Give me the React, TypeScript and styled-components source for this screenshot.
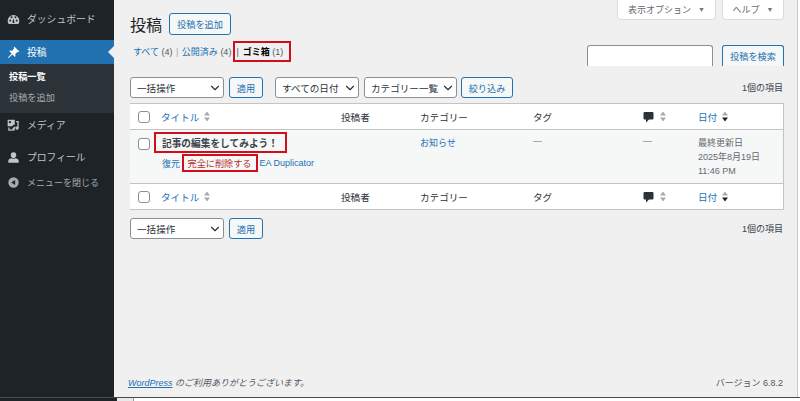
import styled, { createGlobalStyle } from "styled-components";
import { ChevronDown } from "lucide-react";

const GlobalStyle = createGlobalStyle`
  html, body {
    margin: 0;
    padding: 0;
    background: #f0f0f1;
  }
  body {
    font-family: "Liberation Sans", "Noto Sans CJK JP", sans-serif;
    font-size: 9px;
    color: #3c434a;
  }
`;

const Page = styled.div`
  display: flex;
  flex-direction: column;
  width: 800px;
  height: 401px;
  overflow: hidden;
  background: #ffffff;
`;

const Screen = styled.div`
  display: flex;
  height: 397px;
  margin-right: 2px;
`;

const BottomEdge = styled.div`
  display: flex;
  height: 4px;
  border-top: 1px solid #4a4a4a;
  box-sizing: border-box;
`;

const EdgeDark = styled.div`
  width: 117px;
  background: #1d2327;
`;

const EdgeLight = styled.div`
  width: 16px;
  background: #e9e9e9;
  border-right: 1px solid #9a9a9a;
`;

const Sidebar = styled.nav`
  width: 114px;
  flex-shrink: 0;
  background: #1d2327;
  color: #c3c4c7;
  padding-top: 8px;
`;

const MenuItem = styled.div<{ $active?: boolean; $height?: number; $dim?: boolean; $top?: number }>`
  position: relative;
  display: flex;
  align-items: center;
  gap: 7px;
  height: ${(p) => p.$height ?? 22}px;
  margin-top: ${(p) => p.$top ?? 0}px;
  padding-left: 7px;
  font-size: ${(p) => (p.$dim ? 9 : 9.8)}px;
  background: ${(p) => (p.$active ? "#2271b1" : "transparent")};
  color: ${(p) => (p.$active ? "#ffffff" : p.$dim ? "#a7aaad" : "#c3c4c7")};
`;

const MenuIcon = styled.svg`
  width: 13px;
  height: 13px;
  flex-shrink: 0;
  fill: currentColor;
`;

const ActiveNotch = styled.span`
  position: absolute;
  right: 0;
  top: 6px;
  border-style: solid;
  border-width: 6px 6px 6px 0;
  border-color: transparent #f0f0f1 transparent transparent;
`;

const SubMenu = styled.div`
  background: #2c3338;
  padding: 3px 0 4px 9px;
`;

const SubItem = styled.div<{ $current?: boolean }>`
  height: 21px;
  line-height: 21px;
  font-size: 9.2px;
  font-weight: ${(p) => (p.$current ? 700 : 400)};
  color: ${(p) => (p.$current ? "#ffffff" : "#a7aaad")};
`;

const Content = styled.main`
  flex: 1;
  display: flex;
  flex-direction: column;
  background: #f0f0f1;
  padding: 0 13px 0 16px;
  min-width: 0;
  border-right: 1px solid #c8c8c8;
`;

const ScreenTabs = styled.div`
  display: flex;
  flex-shrink: 0;
  justify-content: flex-end;
  gap: 6px;
  height: 20px;
`;

const ScreenTab = styled.div<{ $width: number }>`
  display: flex;
  align-items: center;
  justify-content: center;
  gap: 7px;
  box-sizing: border-box;
  width: ${(p) => p.$width}px;
  background: #ffffff;
  border: 1px solid #dcdcde;
  border-top: none;
  border-radius: 0 0 4px 4px;
  color: #646970;
  font-size: 9px;
`;

const Caret = styled.span`
  font-size: 7px;
  color: #72777c;
`;

const TitleRow = styled.div`
  display: flex;
  flex-shrink: 0;
  align-items: center;
  gap: 7px;
  margin-top: -7px;
  height: 22px;
`;

const PageTitle = styled.h1`
  margin: 0;
  font-size: 16px;
  font-weight: 400;
  color: #1d2327;
`;

const Button = styled.div<{ $width: number; $height?: number; $cut?: boolean }>`
  display: flex;
  align-items: center;
  justify-content: center;
  box-sizing: border-box;
  flex-shrink: 0;
  width: ${(p) => p.$width}px;
  height: ${(p) => p.$height ?? 21}px;
  background: #f6f7f7;
  border: 1px solid #2271b1;
  border-radius: 3px;
  color: #2271b1;
  font-size: 9.2px;
  white-space: nowrap;
  ${(p) => (p.$cut ? "border-bottom: none; border-radius: 3px 3px 0 0;" : "")}
`;

const SearchRow = styled.div`
  display: flex;
  flex-shrink: 0;
  align-items: flex-start;
  justify-content: space-between;
  height: 36px;
  margin-top: 6px;
`;

const Views = styled.div`
  display: flex;
  align-items: center;
  height: 21px;
  padding-left: 3px;
  font-size: 9px;
  color: #646970;
  white-space: pre;
`;

const Link = styled.span`
  color: #2271b1;
`;

const Count = styled.span`
  color: #50575e;
  font-size: 9px;
  font-weight: 400;
`;

const Sep = styled.span`
  margin: 0 3.5px;
  color: #a7aaad;
`;

const Boxed = styled.span`
  display: inline-flex;
  align-items: center;
  box-sizing: border-box;
  width: 58px;
  height: 21px;
  border: 2.5px solid #d30c1c;
  padding-left: 1.5px;
  margin-left: 1.5px;
  color: #000000;
  font-weight: 700;
`;

const BoxedSep = styled.span`
  margin-right: 4px;
  color: #50575e;
  font-weight: 400;
`;

const SearchForm = styled.div`
  display: flex;
  gap: 9px;
  margin-top: 4px;
`;

const SearchInput = styled.div`
  box-sizing: border-box;
  width: 126px;
  height: 21px;
  background: #ffffff;
  border: 1px solid #8c8f94;
  border-bottom: none;
  border-radius: 3px 3px 0 0;
`;

const Toolbar = styled.div`
  display: flex;
  flex-shrink: 0;
  align-items: center;
  height: 21px;
`;

const Select = styled.div<{ $width: number; $after?: number }>`
  display: flex;
  align-items: center;
  justify-content: space-between;
  box-sizing: border-box;
  flex-shrink: 0;
  width: ${(p) => p.$width}px;
  height: 21px;
  padding: 0 1px 0 6px;
  margin-right: ${(p) => p.$after ?? 5}px;
  background: #ffffff;
  border: 1px solid #8c8f94;
  border-radius: 3px;
  font-size: 9.6px;
  color: #2c3338;
  white-space: nowrap;
`;

const Spacer = styled.div<{ $width: number }>`
  width: ${(p) => p.$width}px;
  flex-shrink: 0;
`;

const ItemCount = styled.div`
  margin-left: auto;
  margin-right: 1px;
  font-size: 9px;
  color: #3c434a;
`;

const Table = styled.div`
  box-sizing: border-box;
  flex-shrink: 0;
  margin-top: 5px;
  margin-bottom: 8px;
  width: 654px;
  background: #ffffff;
  border: 1px solid #c3c4c7;
  border-left: none;
  display: grid;
  grid-template-columns: 31px 180px 79px 113px 110px 55px 1fr;
`;

const HeadCell = styled.div<{ $top?: boolean }>`
  display: flex;
  align-items: center;
  gap: 5px;
  box-sizing: border-box;
  height: 26px;
  font-size: 9.6px;
  color: #2c3338;
  ${(p) =>
    p.$top
      ? "border-bottom: 1px solid #c3c4c7;"
      : "border-top: 1px solid #c3c4c7;"}
`;

const CheckCell = styled(HeadCell)`
  padding-left: 8px;
`;

const Checkbox = styled.span`
  display: block;
  box-sizing: border-box;
  width: 12px;
  height: 12px;
  background: #ffffff;
  border: 1px solid #8c8f94;
  border-radius: 3px;
`;

const RowCell = styled.div`
  background: #f6f7f7;
  height: 53px;
  font-size: 9px;
  color: #646970;
  padding-top: 6px;
  box-sizing: border-box;
`;

const RowCheck = styled(RowCell)`
  padding-left: 8px;
  padding-top: 8px;
`;

const TitleCell = styled(RowCell)`
  padding-top: 2px;
`;

const RowTitle = styled.div`
  display: flex;
  align-items: center;
  box-sizing: border-box;
  width: fit-content;
  height: 21px;
  margin-left: -7px;
  padding: 0 7px 0 6px;
  border: 2.5px solid #d30c1c;
  font-weight: 700;
  font-size: 9.7px;
  color: #3c434a;
`;

const RowActions = styled.div`
  display: flex;
  align-items: center;
  height: 18px;
  margin-top: 1px;
  padding-left: 1px;
  white-space: pre;
`;

const DeleteBox = styled.span`
  display: inline-flex;
  align-items: center;
  box-sizing: border-box;
  height: 18px;
  border: 2.5px solid #d30c1c;
  padding: 0 5px 0 3.5px;
  margin: 0 1px 0 2px;
  color: #b32d2e;
  font-size: 9.15px;
`;

const DateText = styled.div`
  line-height: 14px;
  font-size: 9px;
`;

const Sort = styled.svg`
  width: 6px;
  height: 11px;
  flex-shrink: 0;
`;

const CommentIcon = styled.svg`
  width: 11px;
  height: 12px;
  margin-right: 1px;
  fill: #2c3338;
`;

const Footer = styled.footer`
  display: flex;
  justify-content: space-between;
  margin: auto 0 0 -2px;
  padding: 0 1px 8px 0;
  font-size: 9px;
  color: #50575e;
`;

const Thanks = styled.span`
  font-style: italic;
`;

const FooterLink = styled.span`
  color: #2271b1;
  text-decoration: underline;
`;

function SortArrows({ dark }: { dark?: boolean }) {
  return (
    <Sort viewBox="0 0 6 11">
      <path d="M3 0.5 L6 4.500 H0 Z" fill="#a7aaad" />
      <path d="M0 6.500 H6 L3 10.500 Z" fill={dark ? "#1d2327" : "#a7aaad"} />
    </Sort>
  );
}

function Comment() {
  return (
    <CommentIcon viewBox="0 0 11 12">
      <path d="M1.500 1 H9.500 A1 1 0 0 1 10.500 2 V7.500 A1 1 0 0 1 9.500 8.500 H6 L3 11.500 V8.500 H1.500 A1 1 0 0 1 .5 7.500 V2 A1 1 0 0 1 1.500 1 Z" />
    </CommentIcon>
  );
}

function HeaderCells({ top }: { top?: boolean }) {
  return (
    <>
      <CheckCell $top={top}>
        <Checkbox />
      </CheckCell>
      <HeadCell $top={top}>
        <Link>タイトル</Link>
        <SortArrows />
      </HeadCell>
      <HeadCell $top={top}>投稿者</HeadCell>
      <HeadCell $top={top}>カテゴリー</HeadCell>
      <HeadCell $top={top}>タグ</HeadCell>
      <HeadCell $top={top}>
        <Comment />
        <SortArrows />
      </HeadCell>
      <HeadCell $top={top}>
        <Link>日付</Link>
        <SortArrows dark />
      </HeadCell>
    </>
  );
}

export default function App() {
  return (
    <Page>
      <GlobalStyle />
      <Screen>
        <Sidebar>
          <MenuItem>
            <MenuIcon viewBox="0 0 20 20">
              <path d="M10 3a9 9 0 0 0-9 9c0 1.900.6 3.600 1.500 5h15c.9-1.400 1.500-3.100 1.500-5a9 9 0 0 0-9-9zM5 13a1.500 1.500 0 1 1 0-3 1.500 1.500 0 0 1 0 3zm2-5a1.500 1.500 0 1 1 0-3 1.500 1.500 0 0 1 0 3zm4.500 6.500a1.800 1.800 0 0 1-3 0c0-.8 1.500-6 1.500-6s1.500 5.200 1.500 6zM13 8a1.500 1.500 0 1 1 0-3 1.500 1.500 0 0 1 0 3zm2 5a1.500 1.500 0 1 1 0-3 1.500 1.500 0 0 1 0 3z" />
            </MenuIcon>
            ダッシュボード
          </MenuItem>
          <MenuItem $active $height={24} $top={10}>
            <MenuIcon viewBox="0 0 20 20">
              <path d="M11.500 1 19 8.500 17.700 9.800 16.500 8.900 12.500 12.500C13.300 14 13.200 15.700 12.200 16.800L8.300 12.900 2.500 18.500 1.500 17.500 7.100 11.700 3.200 7.800C4.300 6.800 6 6.700 7.500 7.500L11.100 3.500 10.200 2.300Z" />
            </MenuIcon>
            投稿
            <ActiveNotch />
          </MenuItem>
          <SubMenu>
            <SubItem $current>投稿一覧</SubItem>
            <SubItem>投稿を追加</SubItem>
          </SubMenu>
          <MenuItem $height={24}>
            <MenuIcon viewBox="0 0 20 20">
              <path d="M1 1h11v8H9.500l-1 2H1zm3.500 2a1.800 1.800 0 1 0 0 3.600 1.800 1.800 0 0 0 0-3.600zM14 3h4v11a2.500 2.500 0 1 1-2-2.400V5h-2zM2 13h2v3h4v2H2zm8-1h3v1.500h-1V16a2 2 0 1 1-2-2z" />
            </MenuIcon>
            メディア
          </MenuItem>
          <MenuItem $height={28} $top={6}>
            <MenuIcon viewBox="0 0 20 20">
              <path d="M10 2a4.200 4.200 0 0 1 4.200 4.500c0 2.600-1.900 4.500-4.200 4.500S5.800 9.100 5.800 6.500A4.200 4.200 0 0 1 10 2zM2 18v-3c0-2 3-3.500 5-3.800 1.800 1.200 4.200 1.200 6 0 2 .3 5 1.800 5 3.800v3z" />
            </MenuIcon>
            プロフィール
          </MenuItem>
          <MenuItem $height={22} $dim>
            <MenuIcon viewBox="0 0 20 20">
              <path d="M10 2a8 8 0 1 1 0 16 8 8 0 0 1 0-16zm2.500 4L6.500 10l6 4z" />
            </MenuIcon>
            メニューを閉じる
          </MenuItem>
        </Sidebar>
        <Content>
          <ScreenTabs>
            <ScreenTab $width={99}>
              表示オプション <Caret>▼</Caret>
            </ScreenTab>
            <ScreenTab $width={62}>
              ヘルプ <Caret>▼</Caret>
            </ScreenTab>
          </ScreenTabs>
          <TitleRow>
            <PageTitle>投稿</PageTitle>
            <Button $width={62} $height={22}>投稿を追加</Button>
          </TitleRow>
          <SearchRow>
            <Views>
              <Link>すべて </Link>
              <Count>(4)</Count>
              <Sep>|</Sep>
              <Link>公開済み </Link>
              <Count>(4)</Count>
              <Boxed>
                <BoxedSep>|</BoxedSep>
                ゴミ箱 <Count>(1)</Count>
              </Boxed>
            </Views>
            <SearchForm>
              <SearchInput />
              <Button $width={62} $cut>投稿を検索</Button>
            </SearchForm>
          </SearchRow>
          <Toolbar>
            <Select $width={94}>
              一括操作 <ChevronDown size={14} />
            </Select>
            <Button $width={34}>適用</Button>
            <Spacer $width={12} />
            <Select $width={84}>
              すべての日付 <ChevronDown size={14} />
            </Select>
            <Select $width={93} $after={4}>
              カテゴリー一覧 <ChevronDown size={14} />
            </Select>
            <Button $width={52}>絞り込み</Button>
            <ItemCount>1個の項目</ItemCount>
          </Toolbar>
          <Table>
            <HeaderCells top />
            <RowCheck>
              <Checkbox />
            </RowCheck>
            <TitleCell>
              <RowTitle>記事の編集をしてみよう！</RowTitle>
              <RowActions>
                <Link>復元</Link>
                <DeleteBox>完全に削除する</DeleteBox>
                <Link>EA Duplicator</Link>
              </RowActions>
            </TitleCell>
            <RowCell />
            <RowCell>
              <Link>お知らせ</Link>
            </RowCell>
            <RowCell>—</RowCell>
            <RowCell>—</RowCell>
            <RowCell>
              <DateText>
                最終更新日
                <br />
                2025年8月19日
                <br />
                11:46 PM
              </DateText>
            </RowCell>
            <HeaderCells />
          </Table>
          <Toolbar>
            <Select $width={94}>
              一括操作 <ChevronDown size={14} />
            </Select>
            <Button $width={34}>適用</Button>
            <ItemCount>1個の項目</ItemCount>
          </Toolbar>
          <Footer>
            <Thanks>
              <FooterLink>WordPress</FooterLink> のご利用ありがとうございます。
            </Thanks>
            <span>バージョン 6.8.2</span>
          </Footer>
        </Content>
      </Screen>
      <BottomEdge>
        <EdgeDark />
        <EdgeLight />
      </BottomEdge>
    </Page>
  );
}
